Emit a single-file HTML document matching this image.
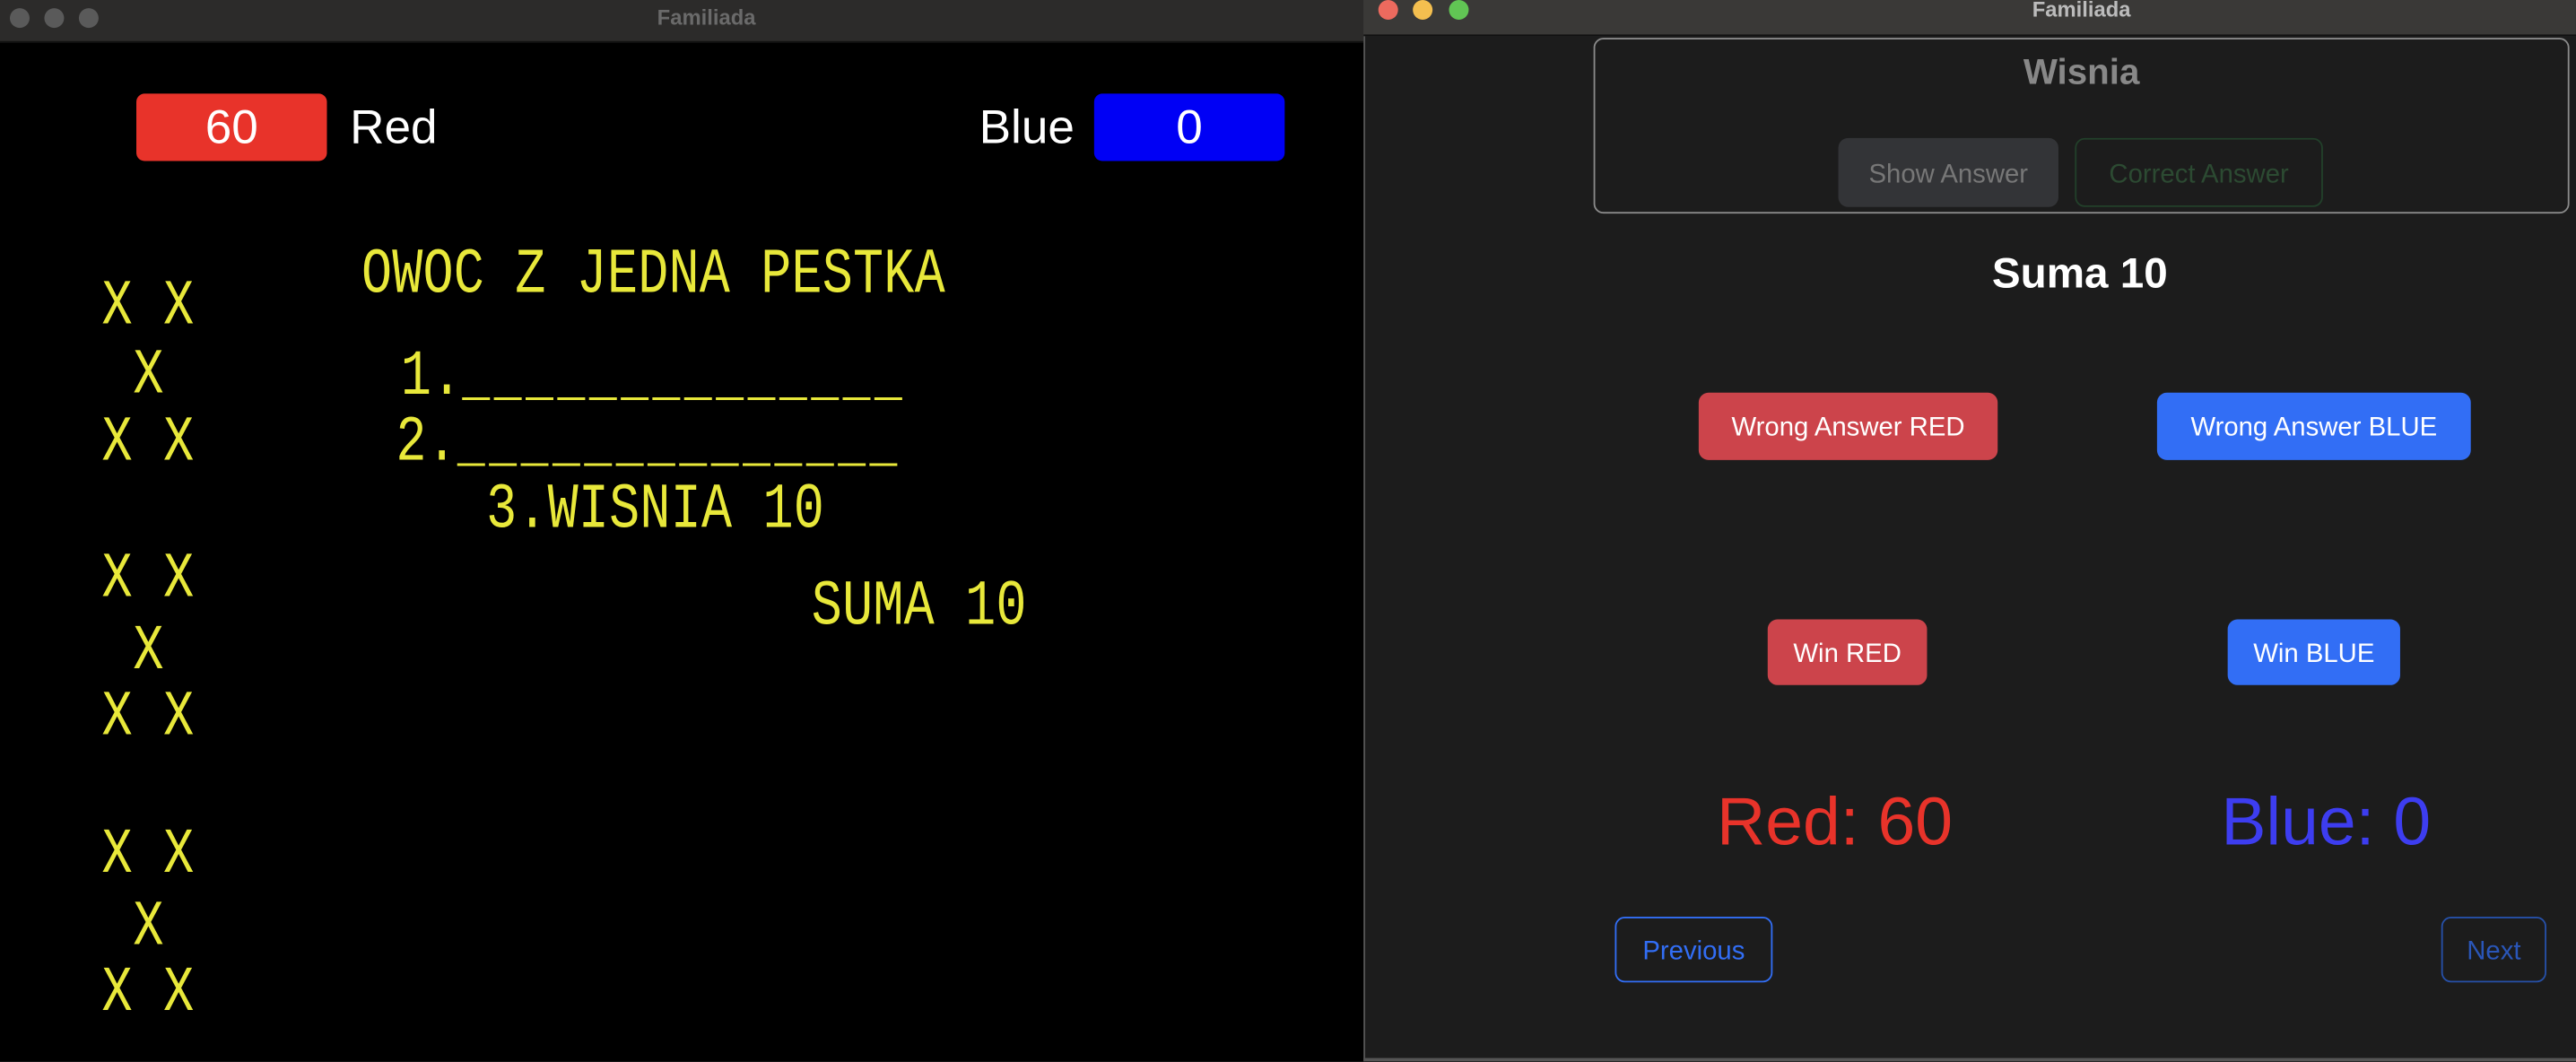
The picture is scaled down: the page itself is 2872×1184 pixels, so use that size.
<!DOCTYPE html>
<html><head><meta charset="utf-8"><style>
*{margin:0;padding:0;box-sizing:border-box}
html,body{width:2872px;height:1184px;overflow:hidden;background:#1c1c1c}
#w{position:absolute;left:0;top:0;width:1568px;height:646.4px;transform:scale(1.8316);transform-origin:0 0;font-family:"Liberation Sans",sans-serif}
.a{position:absolute;white-space:pre}
.m{position:absolute;white-space:pre;font-family:"Liberation Mono",monospace;font-size:31px;line-height:1;color:#e8e83a;transform:scaleY(1.25);transform-origin:0 0;letter-spacing:0.1px}
.u{letter-spacing:2.5px;font-size:28px}
.btn{position:absolute;border-radius:6px;color:#fff;font-size:16px;display:flex;align-items:center;justify-content:center;padding-top:3px}
</style></head><body><div id="w">
<div class="a" style="left:0;top:0;width:830px;height:646.4px;background:#000"></div>
<div class="a" style="left:0;top:0;width:830px;height:26px;background:#2c2b2a;border-bottom:1px solid #111"></div>
<div class="a" style="left:6px;top:5px;width:12px;height:12px;border-radius:50%;background:#5a5a5a"></div>
<div class="a" style="left:27px;top:5px;width:12px;height:12px;border-radius:50%;background:#5a5a5a"></div>
<div class="a" style="left:48px;top:5px;width:12px;height:12px;border-radius:50%;background:#5a5a5a"></div>
<div class="a" style="left:380px;top:3px;width:100px;text-align:center;font-size:13px;font-weight:bold;color:#6a6a6a">Familiada</div>
<div class="a" style="left:83px;top:57px;width:116px;height:41px;background:#e8332a;border-radius:5px;color:#fff;font-size:29px;text-align:center;line-height:43px">60</div>
<div class="a" style="left:213px;top:58px;font-size:29px;line-height:41px;color:#fff">Red</div>
<div class="a" style="left:596px;top:58px;font-size:29px;line-height:41px;color:#fff">Blue</div>
<div class="a" style="left:666px;top:57px;width:116px;height:41px;background:#0000f5;border-radius:5px;color:#fff;font-size:29px;text-align:center;line-height:43px">0</div>
<div class="m" style="left:220px;top:149px">OWOC Z JEDNA PESTKA</div>
<div class="m" style="left:244px;top:211px">1.<span class="u">______________</span></div>
<div class="m" style="left:241px;top:251px">2.<span class="u">______________</span></div>
<div class="m" style="left:296px;top:292px">3.WISNIA 10</div>
<div class="m" style="left:494px;top:351px">SUMA 10</div>
<div class="m" style="left:62px;top:168px">X X</div>
<div class="m" style="left:81px;top:210px">X</div>
<div class="m" style="left:62px;top:251px">X X</div>
<div class="m" style="left:62px;top:334px">X X</div>
<div class="m" style="left:81px;top:378px">X</div>
<div class="m" style="left:62px;top:418px">X X</div>
<div class="m" style="left:62px;top:502px">X X</div>
<div class="m" style="left:81px;top:546px">X</div>
<div class="m" style="left:62px;top:586px">X X</div>
<div class="a" style="left:830px;top:0;width:738px;height:646.4px;background:#1c1c1c;border-left:1px solid #555;border-bottom:2px solid #555"></div>
<div class="a" style="left:830px;top:0;width:738px;height:22px;background:#3a3937;border-bottom:1px solid #111"></div>
<div class="a" style="left:839px;top:0;width:12px;height:12px;border-radius:50%;background:#ec6a5e"></div>
<div class="a" style="left:860px;top:0;width:12px;height:12px;border-radius:50%;background:#f4bf4f"></div>
<div class="a" style="left:882px;top:0;width:12px;height:12px;border-radius:50%;background:#61c554"></div>
<div class="a" style="left:1217px;top:-2px;width:100px;text-align:center;font-size:13px;font-weight:bold;color:#bbb">Familiada</div>
<div class="a" style="left:970px;top:23px;width:594px;height:107px;border:1px solid #8a8a8a;border-radius:6px"></div>
<div class="a" style="left:970px;top:31px;width:594px;text-align:center;font-size:22px;font-weight:bold;color:#888">Wisnia</div>
<div class="btn" style="left:1119px;top:84px;width:134px;height:42px;background:#333437;color:#777">Show Answer</div>
<div class="btn" style="left:1263px;top:84px;width:151px;height:42px;border:1px solid #22402a;color:#2c4a32">Correct Answer</div>
<div class="a" style="left:1116px;top:151px;width:300px;text-align:center;font-size:26px;font-weight:bold;color:#fff">Suma 10</div>
<div class="btn" style="left:1034px;top:239px;width:182px;height:41px;background:#cc444b">Wrong Answer RED</div>
<div class="btn" style="left:1313px;top:239px;width:191px;height:41px;background:#326ef5">Wrong Answer BLUE</div>
<div class="btn" style="left:1076px;top:377px;width:97px;height:40px;background:#cc444b">Win RED</div>
<div class="btn" style="left:1356px;top:377px;width:105px;height:40px;background:#326ef5">Win BLUE</div>
<div class="a" style="left:1045px;top:477px;font-size:41px;color:#e8332a">Red: 60</div>
<div class="a" style="left:1352px;top:477px;font-size:41px;color:#3d3df0">Blue: 0</div>
<div class="btn" style="left:983px;top:558px;width:96px;height:40px;border:1px solid #326ef5;color:#326ef5">Previous</div>
<div class="btn" style="left:1486px;top:558px;width:64px;height:40px;border:1px solid #2650a8;color:#2a56b8">Next</div>
</div></body></html>
